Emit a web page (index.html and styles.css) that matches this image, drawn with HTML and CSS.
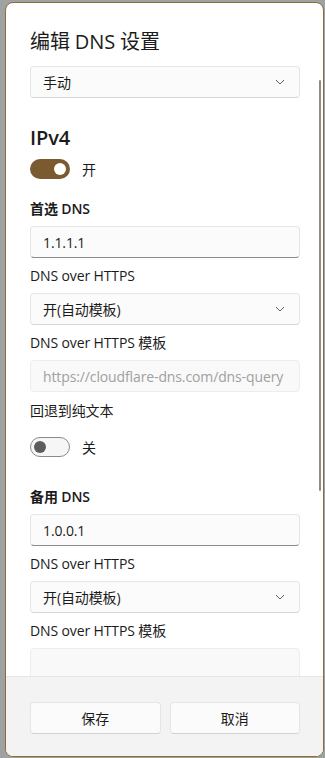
FILE: index.html
```html
<!DOCTYPE html>
<html lang="zh-CN">
<head>
    <meta charset="UTF-8">
    <meta name="viewport" content="width=device-width, initial-scale=1.0">
    <title>编辑 DNS 设置</title>
    <link rel="stylesheet" href="styles.css">
</head>
<body>
    <div class="dialog">
        <div class="content">
            <h1 class="title">编辑 DNS 设置</h1>
            <div class="field select mt-title">
                <span>手动</span>
                <svg class="chevron" viewBox="0 0 10 6" width="10" height="6"><path d="M1 1l4 4 4-4"/></svg>
            </div>

            <h2 class="heading">IPv4</h2>
            <div class="toggle-row mt-toggle">
                <span class="switch on"><span class="knob"></span></span>
                <span>开</span>
            </div>

            <div class="label strong mt-group">首选 DNS</div>
            <div class="field input">1.1.1.1</div>
            <div class="label">DNS over HTTPS</div>
            <div class="field select">
                <span>开(自动模板)</span>
                <svg class="chevron" viewBox="0 0 10 6" width="10" height="6"><path d="M1 1l4 4 4-4"/></svg>
            </div>
            <div class="label">DNS over HTTPS 模板</div>
            <div class="field disabled">https://cloudflare-dns.com/dns-query</div>
            <div class="label mt-fallback">回退到纯文本</div>
            <div class="toggle-row mt-switch">
                <span class="switch off"><span class="knob"></span></span>
                <span>关</span>
            </div>

            <div class="label strong mt-section">备用 DNS</div>
            <div class="field input">1.0.0.1</div>
            <div class="label">DNS over HTTPS</div>
            <div class="field select">
                <span>开(自动模板)</span>
                <svg class="chevron" viewBox="0 0 10 6" width="10" height="6"><path d="M1 1l4 4 4-4"/></svg>
            </div>
            <div class="label">DNS over HTTPS 模板</div>
            <div class="field disabled"></div>

            <div class="scrollbar"></div>
        </div>
        <div class="footer">
            <button class="btn">保存</button>
            <button class="btn">取消</button>
        </div>
    </div>
</body>
</html>
```

FILE: styles.css
```css
:root {
    --text: #1b1b1b;
    --muted: #a0a0a0;
    --field-bg: #fbfbfb;
    --field-border: #e5e5e5;
    --accent: #7a5a2f;
    --frame: #8c6d35;
}

html, body {
    margin: 0;
    padding: 0;
}
body {
    width: 325px;
    height: 758px;
    overflow: hidden;
    background-color: #9fa2a2;
    font-family: "Segoe UI", "Open Sans", "Noto Sans CJK SC", sans-serif;
    font-size: 14px;
    letter-spacing: -0.12px;
    color: var(--text);
    padding-top: 2px;
    padding-left: 5px;
    box-sizing: border-box;
}
.dialog {
    width: 319px;
    height: 755px;
    box-sizing: border-box;
    border: 1px solid var(--frame);
    border-radius: 8px;
    background-color: #ffffff;
    overflow: hidden;
    display: flex;
    flex-direction: column;
}
.content {
    position: relative;
    flex: 1;
    overflow: hidden;
    padding: 25px 23px 0 24px;
    display: flex;
    flex-direction: column;
}
.title {
    margin: 0;
    font-size: 20px;
    font-weight: 400;
    line-height: 28px;
}
.heading {
    margin: 26px 0 0;
    font-size: 20px;
    font-weight: 600;
    line-height: 28px;
}
.label {
    line-height: 20px;
    margin-top: 8px;
}
.label.strong {
    font-weight: 600;
}
.field {
    flex: none;
    height: 32px;
    box-sizing: border-box;
    margin-top: 7px;
    padding: 0 12px;
    display: flex;
    align-items: center;
    justify-content: space-between;
    background-color: var(--field-bg);
    border: 1px solid var(--field-border);
    border-radius: 4px;
}
.select {
    border-bottom-color: #d6d6d6;
}
.input {
    border-bottom-color: #8a8a8a;
}
.disabled {
    color: var(--muted);
    background-color: #f9f9f9;
    border-color: #ededed;
    white-space: nowrap;
}
.chevron {
    fill: none;
    stroke: #5f5f5f;
    stroke-width: 1;
    margin-right: 2px;
}
.mt-title { margin-top: 10px; }
.mt-toggle { margin-top: 7px; }
.mt-group { margin-top: 20px; }
.mt-fallback { margin-top: 9px; }
.mt-switch { margin-top: 16px; }
.mt-section { margin-top: 30px; }

.toggle-row {
    display: flex;
    align-items: center;
    gap: 12px;
    height: 20px;
}
.switch {
    width: 40px;
    height: 20px;
    box-sizing: border-box;
    border-radius: 10px;
    display: flex;
    align-items: center;
    padding: 0 4px;
}
.switch .knob {
    width: 12px;
    height: 12px;
    border-radius: 50%;
}
.switch.on {
    background-color: var(--accent);
    justify-content: flex-end;
}
.switch.on .knob {
    background-color: #ffffff;
}
.switch.off {
    background-color: #f6f6f6;
    border: 1px solid #8a8a8a;
    padding: 0 3px;
}
.switch.off .knob {
    background-color: #5c5c5c;
}

.scrollbar {
    position: absolute;
    right: 2px;
    top: 77px;
    width: 2px;
    height: 411px;
    border-radius: 1px;
    background-color: #8c8c8c;
}

.footer {
    flex: none;
    height: 80px;
    box-sizing: border-box;
    border-top: 1px solid #e5e5e5;
    background-color: #f3f3f3;
    padding: 25px 23px 0 24px;
    display: flex;
    gap: 9px;
}
.btn {
    flex: 1;
    height: 32px;
    font: inherit;
    letter-spacing: inherit;
    color: var(--text);
    background-color: var(--field-bg);
    border: 1px solid var(--field-border);
    border-bottom-color: #d2d2d2;
    border-radius: 4px;
}
```
